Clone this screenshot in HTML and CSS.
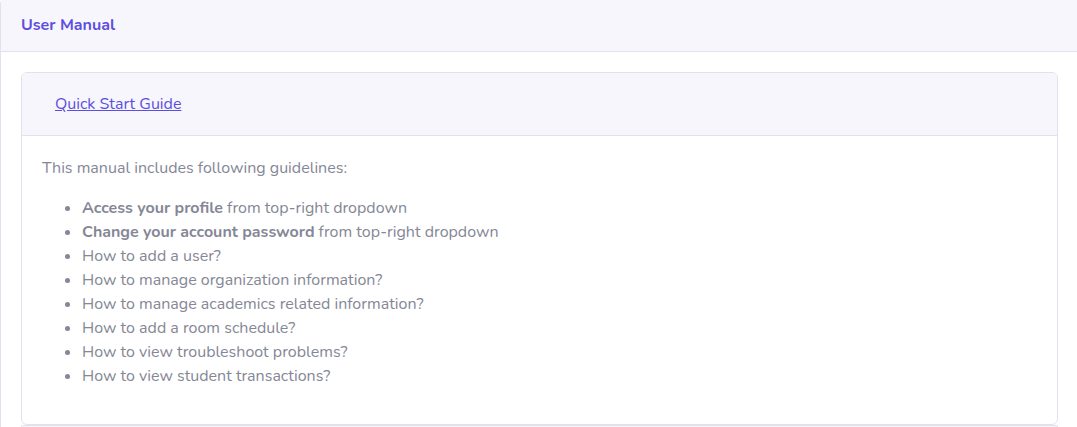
FILE: index.html
```html
<!DOCTYPE html>
<html lang="en">
<head>
<meta charset="utf-8">
<title>User Manual</title>
<link rel="stylesheet" href="styles.css">
</head>
<body>
<main class="card card-outer">
  <header class="card-header"><h1 class="card-title">User Manual</h1></header>
  <div class="card-body">
    <section class="card card-inner">
      <h2 class="guide-header"><button class="link-button" type="button" aria-expanded="true" aria-controls="guide">Quick Start Guide</button></h2>
      <div class="guide-body" id="guide">
        <p class="intro">This manual includes following guidelines:</p>
        <ul class="guidelines">
          <li><b>Access your profile</b> from top-right dropdown</li>
          <li><b>Change your account password</b> from top-right dropdown</li>
          <li>How to add a user?</li>
          <li>How to manage organization information?</li>
          <li>How to manage academics related information?</li>
          <li>How to add a room schedule?</li>
          <li>How to view troubleshoot problems?</li>
          <li>How to view student transactions?</li>
        </ul>
      </div>
    </section>
    <section class="card card-inner card-next"></section>
  </div>
</main>
</body>
</html>
```
FILE: styles.css
```css
* { box-sizing: border-box; }
body {
  margin: 0;
  background: #fff;
  color: #858796;
  font: 400 16px/24px Nunito, "Open Sans", sans-serif;
}
.card { border: 1px solid #e1e2ee; }
.card-outer { border-width: 0 0 0 1px; border-radius: 4px 0 0 0; }
.card-header {
  padding: 13px 20px 14px;
  background: #f7f6fc;
  border-bottom: 1px solid #e1e2ee;
  border-radius: 4px 0 0 0;
}
.card-title { margin: 0; color: #5c4fe0; font-size: 16px; line-height: 24px; font-weight: 700; }
.card-body { padding: 20px 19px 0 20px; }
.card-inner { border-radius: 6px; overflow: hidden; }
.card-next { padding-top: 1px; border-bottom: 0; border-radius: 6px 6px 0 0; background: #f7f6fc; }
.guide-header { margin: 0; padding: 12px 20px; background: #f7f6fc; border-bottom: 1px solid #e1e2ee; font-size: 16px; line-height: 24px; }
.link-button { display: block; padding: 7px 13px; border: 0; background: none; color: #5c4fe0; font: inherit; font-weight: 400; text-decoration: underline; cursor: pointer; }
.guide-body { padding: 20px; }
.intro { margin: 0 0 16px; }
.guidelines { margin: 0 0 16px; padding-left: 40px; }
```
